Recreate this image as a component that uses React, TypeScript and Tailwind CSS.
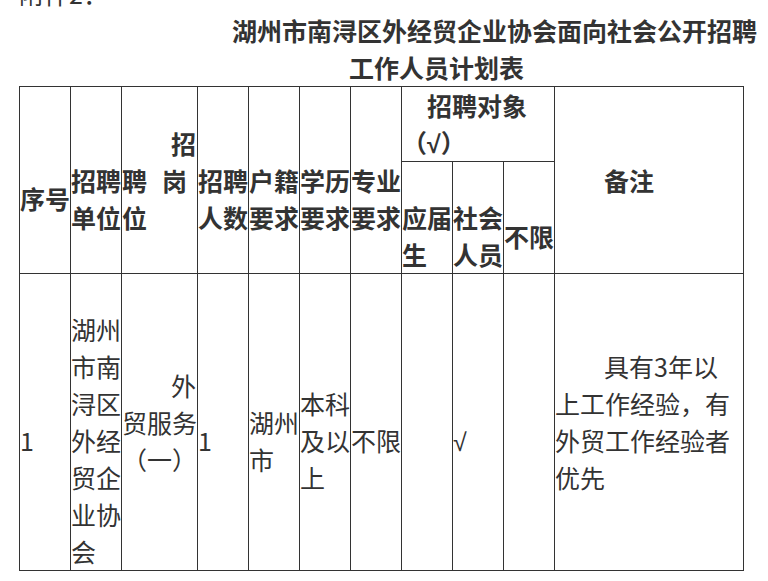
const cell = "border border-[#333] p-0 align-middle text-left whitespace-nowrap";
const tick = { fontFamily: '"Liberation Sans", sans-serif' };

// stacked text, one line per entry
function Lines({ items }: { items: string[] }) {
  return (
    <>
      {items.map((t, i) => (
        <div key={i}>{t}</div>
      ))}
    </>
  );
}

export default function App() {
  return (
    <div
      className="mt-[-25px] pl-[19px] text-[25px] leading-[37px] text-[#333]"
      style={{ fontFamily: '"Noto Sans CJK SC", "Noto Sans", sans-serif' }}
    >
      <div className="h-[37px]">附件2：</div>
      <div className="h-[37px] whitespace-nowrap pl-[213px] font-bold">湖州市南浔区外经贸企业协会面向社会公开招聘</div>
      <div className="h-[37px] whitespace-nowrap pl-[330px] font-bold">工作人员计划表</div>

      <table className="table-fixed border-collapse w-[725px]">
        <colgroup>
          <col className="w-[51px]" />
          <col className="w-[51px]" />
          <col className="w-[76px]" />
          <col className="w-[51px]" />
          <col className="w-[51px]" />
          <col className="w-[51px]" />
          <col className="w-[51px]" />
          <col className="w-[51px]" />
          <col className="w-[51px]" />
          <col className="w-[51px]" />
          <col className="w-[189px]" />
        </colgroup>
        <tbody className="font-bold">
          <tr className="h-[75px]">
            <td rowSpan={2} className={`${cell} pt-[37px]`}>序号</td>
            <td rowSpan={2} className={`${cell} pt-[37px]`}>
              <Lines items={["招聘", "单位"]} />
            </td>
            <td rowSpan={2} className={cell}>
              <div className="pl-[49px]">招</div>
              <div>
                聘<span className="ml-[15px]">岗</span>
              </div>
              <div>位</div>
            </td>
            <td rowSpan={2} className={`${cell} pt-[37px]`}>
              <Lines items={["招聘", "人数"]} />
            </td>
            <td rowSpan={2} className={`${cell} pt-[37px]`}>
              <Lines items={["户籍", "要求"]} />
            </td>
            <td rowSpan={2} className={`${cell} pt-[37px]`}>
              <Lines items={["学历", "要求"]} />
            </td>
            <td rowSpan={2} className={`${cell} pt-[37px]`}>
              <Lines items={["专业", "要求"]} />
            </td>
            <td colSpan={3} className={cell}>
              <div className="pl-[25px]">招聘对象</div>
              <div className="h-[37px]">
                （<span className="leading-none" style={tick}>√</span>）
              </div>
            </td>
            <td rowSpan={2} className={`${cell} pl-[49px]`}>备注</td>
          </tr>
          <tr className="h-[112px]">
            <td className={`${cell} pt-[37px]`}>
              <Lines items={["应届", "生"]} />
            </td>
            <td className={`${cell} pt-[37px]`}>
              <Lines items={["社会", "人员"]} />
            </td>
            <td className={`${cell} pt-[37px]`}>不限</td>
          </tr>
        </tbody>
        <tbody>
          <tr className="h-[297px]">
            <td className={`${cell} pt-[37px]`}>1</td>
            <td className={`${cell} pt-[37px]`}>
              <Lines items={["湖州", "市南", "浔区", "外经", "贸企", "业协", "会"]} />
            </td>
            <td className={cell}>
              <div className="pl-[49px]">外</div>
              <div>贸服务</div>
              <div>（一）</div>
            </td>
            <td className={`${cell} pt-[37px]`}>1</td>
            <td className={`${cell} pt-[37px]`}>
              <Lines items={["湖州", "市"]} />
            </td>
            <td className={`${cell} pt-[37px]`}>
              <Lines items={["本科", "及以", "上"]} />
            </td>
            <td className={`${cell} pt-[37px]`}>不限</td>
            <td className={cell}></td>
            <td className={`${cell} pt-[37px]`}>
              <div className="h-[37px]">
                <span className="leading-none" style={tick}>√</span>
              </div>
            </td>
            <td className={cell}></td>
            <td className={cell}>
              <div className="pl-[49px]">具有3年以</div>
              <div>上工作经验，有</div>
              <div>外贸工作经验者</div>
              <div>优先</div>
            </td>
          </tr>
        </tbody>
      </table>
    </div>
  );
}
